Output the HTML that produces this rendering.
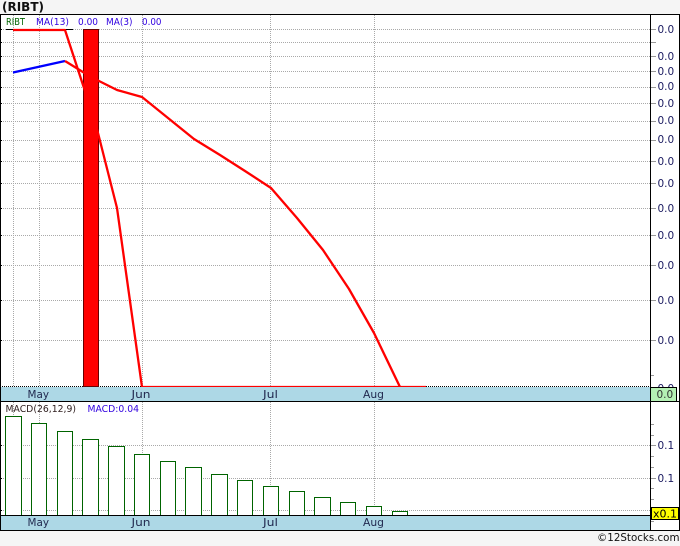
<!DOCTYPE html>
<html><head><meta charset="utf-8"><style>
html,body{margin:0;padding:0;background:#f5f5f5}
svg{display:block;font-family:"DejaVu Sans","Liberation Sans",sans-serif;font-size:10px}
</style></head><body>
<svg width="680" height="546" viewBox="0 0 680 546" xmlns="http://www.w3.org/2000/svg" shape-rendering="crispEdges">
<rect width="680" height="546" fill="#f5f5f5"/>
<rect x="0" y="14" width="680" height="517" fill="#fff"/>
<text x="2" y="11" font-size="12.5" font-weight="bold" fill="#111" textLength="42" lengthAdjust="spacingAndGlyphs" shape-rendering="auto">(RIBT)</text>
<g stroke="#a9a9a9" stroke-width="1" stroke-dasharray="1 1" fill="none">
<path d="M3 29.5H650M3 42.5H650M3 56.5H650M3 71.5H650M3 87.5H650M3 103.5H650M3 121.5H650M3 140.5H650M3 161.5H650M3 183.5H650M3 208.5H650M3 235.5H650M3 265.5H650M3 300.5H650M3 340.5H650"/>
<path d="M13.5 15V387M39.5 15V387M142.5 15V387M270.5 15V387M374.5 15V387"/>
<path d="M3 445.5H650M3 478.5H650M3 510.5H650"/>
<path d="M13.5 402V515M39.5 402V515M142.5 402V515M270.5 402V515M374.5 402V515"/>
</g>
<path d="M0 386.5H650" stroke="#000" stroke-dasharray="1 1"/>
<path d="M6 29.5H73" stroke="#000"/>
<g stroke="#999"><path d="M650 29.5H656M650 42.5H656M650 56.5H656M650 71.5H656M650 87.5H656M650 103.5H656M650 121.5H656M650 140.5H656M650 161.5H656M650 183.5H656M650 208.5H656M650 235.5H656M650 265.5H656M650 300.5H656M650 340.5H656M650 375.5H654M650 424.5H654M650 435.5H654M650 445.5H656M650 456.5H654M650 467.5H654M650 478.5H656M650 488.5H654M650 499.5H654M650 510.5H656M650 521.5H654"/></g>
<g stroke="#000"><path d="M0 29.5H2M0 42.5H2M0 56.5H2M0 71.5H2M0 87.5H2M0 103.5H2M0 121.5H2M0 140.5H2M0 161.5H2M0 183.5H2M0 208.5H2M0 235.5H2M0 265.5H2M0 300.5H2M0 340.5H2M0 445.5H2M0 478.5H2M0 510.5H2"/></g>
<rect x="83.5" y="29.5" width="15" height="357" fill="#f00" stroke="#600"/>
<g fill="none" stroke-width="2.3" shape-rendering="auto" stroke-linejoin="round">
<path d="M13 72.5L65 61" stroke="#00f"/>
<path d="M13 30H65L83 85L91 108L98 133L117 208L142 387H426" stroke="#f00"/>
<path d="M65 61L91 77L117 90L142 97L168 118L194 139L220 155L245 171L271 188L297 218L323 250L349 289L374 333L400 387" stroke="#f00"/>
</g>
<rect x="0" y="387" width="650" height="14" fill="#add8e6"/>
<rect x="0" y="515" width="650" height="15" fill="#add8e6"/>
<g fill="#fff" stroke="#006400">
<path d="M5.5 515V416.5H21.5V515M31.5 515V423.5H46.5V515M57.5 515V431.5H72.5V515M82.5 515V439.5H98.5V515M108.5 515V446.5H124.5V515M134.5 515V454.5H149.5V515M160.5 515V461.5H175.5V515M185.5 515V467.5H201.5V515M211.5 515V474.5H227.5V515M237.5 515V480.5H252.5V515M263.5 515V486.5H278.5V515M289.5 515V491.5H304.5V515M314.5 515V497.5H330.5V515M340.5 515V502.5H355.5V515M366.5 515V506.5H381.5V515M392.5 515V511.5H407.5V515"/>
</g>
<g stroke="#000" fill="none">
<path d="M0 14.5H680M650.5 14V531M679.5 14V531M0.5 14V531M0 401.5H680M0 515.5H650M0 530.5H680"/>
</g>
<g shape-rendering="auto" font-size="10.5">
<g fill="#1a1a60">
<text x="657.5" y="33">0.0</text><text x="657.5" y="60">0.0</text><text x="657.5" y="75">0.0</text><text x="657.5" y="90">0.0</text><text x="657.5" y="107">0.0</text><text x="657.5" y="124">0.0</text><text x="657.5" y="143">0.0</text><text x="657.5" y="165">0.0</text><text x="657.5" y="187">0.0</text><text x="657.5" y="212">0.0</text><text x="657.5" y="239">0.0</text><text x="657.5" y="269">0.0</text><text x="657.5" y="304">0.0</text><text x="657.5" y="344">0.0</text><text x="657.5" y="392">0.0</text>
<text x="657.5" y="449">0.1</text><text x="657.5" y="482">0.1</text>
</g>
</g>
<rect x="651" y="387" width="25" height="14" fill="#b4f0b4"/>
<path d="M676.5 387V401M651 387.5H677" stroke="#000" fill="none"/>
<rect x="651.5" y="507.5" width="27" height="12" fill="#ff0" stroke="#000"/>
<g shape-rendering="auto" font-size="10.5">
<text x="656.5" y="398" fill="#333">0.0</text>
<text x="653" y="517.5" fill="#000" textLength="24" lengthAdjust="spacingAndGlyphs">x0.1</text>
</g>
<g shape-rendering="auto">
<text x="6" y="25" fill="#006400" textLength="19" lengthAdjust="spacingAndGlyphs">RIBT</text>
<text x="36" y="25" fill="#3000e0" textLength="33" lengthAdjust="spacingAndGlyphs">MA(13)</text>
<text x="78" y="25" fill="#3000e0" textLength="20" lengthAdjust="spacingAndGlyphs">0.00</text>
<text x="106" y="25" fill="#3000e0" textLength="26.5" lengthAdjust="spacingAndGlyphs">MA(3)</text>
<text x="142" y="25" fill="#3000e0" textLength="19.5" lengthAdjust="spacingAndGlyphs">0.00</text>
<g fill="#222a50" font-size="10.5">
<text x="27.5" y="398" textLength="21.5" lengthAdjust="spacingAndGlyphs">May</text><text x="131.5" y="398" textLength="19" lengthAdjust="spacingAndGlyphs">Jun</text><text x="263" y="398" textLength="15" lengthAdjust="spacingAndGlyphs">Jul</text><text x="363" y="398" textLength="21" lengthAdjust="spacingAndGlyphs">Aug</text>
<text x="27.5" y="526" textLength="21.5" lengthAdjust="spacingAndGlyphs">May</text><text x="131.5" y="526" textLength="19" lengthAdjust="spacingAndGlyphs">Jun</text><text x="263" y="526" textLength="15" lengthAdjust="spacingAndGlyphs">Jul</text><text x="363" y="526" textLength="21" lengthAdjust="spacingAndGlyphs">Aug</text>
</g>
<text x="5.5" y="412" fill="#302020" textLength="70.5" lengthAdjust="spacingAndGlyphs">MACD(26,12,9)</text>
<text x="87.5" y="412" fill="#3000e0" textLength="51.5" lengthAdjust="spacingAndGlyphs">MACD:0.04</text>
<text x="597" y="541" fill="#111" font-size="11" textLength="82.5" lengthAdjust="spacingAndGlyphs">©12Stocks.com</text>
</g>
</svg>
</body></html>
